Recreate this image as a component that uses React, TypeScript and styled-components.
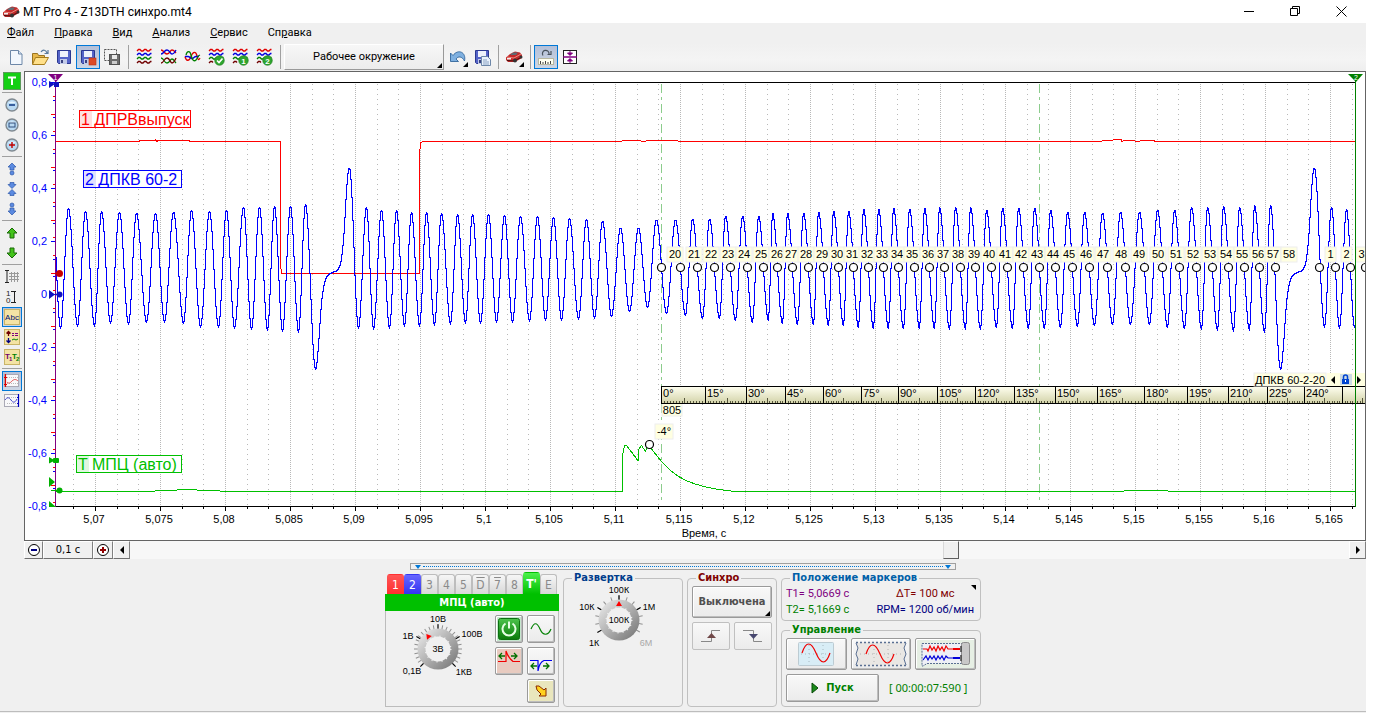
import React from "react";
import styled, { createGlobalStyle, css } from "styled-components";

const UI = `"DejaVu Sans Condensed", "DejaVu Sans", sans-serif`;
const ARIAL = `"Liberation Sans", Arial, sans-serif`;
const NARROW = `Roboto, "Noto Sans", sans-serif`;

const Global = createGlobalStyle`
  * { box-sizing: border-box; }
  body { margin: 0; background: #fff; }
  button { margin: 0; padding: 0; font: inherit; color: inherit; }
  svg { display: block; }
`;

const Window = styled.div`
  display: flex;
  flex-direction: column;
  min-height: 100vh;
  margin-right: 7px;
  background: #f0f0f0;
  color: #000;
  font: 11px/14px ${UI};
`;

/* ---------- title and menu ---------- */
const TitleBar = styled.header`
  display: flex;
  align-items: center;
  height: 23px;
  padding: 0 2px;
  gap: 3px;
  background: #fff;
`;
const Title = styled.h1`
  flex: 1;
  margin: 0;
  font: 12px/16px ${NARROW};
`;
const WindowControls = styled.div`
  display: flex;
`;
const ControlButton = styled.button`
  display: grid;
  place-items: center;
  width: 46px;
  height: 20px;
  border: 0;
  background: none;
`;
const MenuBar = styled.nav`
  display: flex;
  gap: 20px;
  height: 20px;
  padding: 0 7px;
  align-items: center;
`;
const MenuItem = styled.button`
  border: 0;
  background: none;
  line-height: 20px;
  font-family: ${NARROW};
`;

/* ---------- toolbar ---------- */
const Toolbar = styled.div`
  display: flex;
  align-items: center;
  height: 28px;
  padding-left: 4px;
  background: linear-gradient(#f0f0f0, #f4f4f4 60%, #eee);
`;
const activeTool = css`
  border: 1px solid #0078d7;
  background: linear-gradient(#b4c0d8, #cdd6e4);
`;
const ToolButton = styled.button<{ $active?: boolean }>`
  position: relative;
  display: grid;
  place-items: center;
  width: 24px;
  height: 24px;
  border: 1px solid transparent;
  background: none;
  ${(p) => p.$active && activeTool}
`;
const ToolSeparator = styled.span`
  width: 8px;
  height: 24px;
  display: flex;
  justify-content: center;
  &::before { content: ""; width: 1px; background: #a0a0a0; }
`;
const corner = css`
  &::after {
    content: "";
    position: absolute;
    right: 1px;
    bottom: 1px;
    border-style: solid;
    border-width: 0 0 5px 5px;
    border-color: transparent transparent #000;
  }
`;
const Workspace = styled.button`
  position: relative;
  width: 160px;
  height: 26px;
  margin-right: 2px;
  border: 1px solid;
  border-color: #fff #999 #999 #fff;
  background: linear-gradient(#f7f7f7, #ececec);
  font-family: ${NARROW};
  ${corner}
`;
const MenuTool = styled(ToolButton)`
  ${corner}
`;

/* ---------- work area ---------- */
const WorkArea = styled.main`
  display: flex;
`;
const SideBar = styled.aside`
  display: flex;
  flex-direction: column;
  flex: 0 0 24px;
  padding-left: 2px;
`;
const SideButton = styled(ToolButton)`
  width: 20px;
  height: 20px;
`;
const SideSeparator = styled.span`
  width: 20px;
  height: 4px;
  padding-top: 1px;
  &::before { content: ""; display: block; height: 1px; background: #a0a0a0; }
`;
const ChartColumn = styled.section`
  flex: 1;
  min-width: 0;
`;
const ChartFrame = styled.div`
  border: 1px solid #646464;
  background: #fff;
  svg { width: 100%; height: auto; }
`;
const ScrollRow = styled.div`
  display: flex;
  height: 18px;
`;
const ScrollButton = styled.button<{ $w: number }>`
  display: grid;
  place-items: center;
  flex: 0 0 ${(p) => p.$w}px;
  border: 1px solid;
  border-color: #fff #808080 #707070 #fff;
  background: #f0f0f0;
`;
const ScrollTrack = styled.input`
  appearance: none;
  flex: 1;
  min-width: 0;
  height: 18px;
  margin: 0;
  background: #f7f7f7;
  &::-webkit-slider-thumb {
    appearance: none;
    width: 16px;
    height: 18px;
    border: 1px solid;
    border-color: #fff #606060 #606060 #d8d8d8;
    background: #f0f0f0;
  }
`;

/* ---------- control panels ---------- */
const Splitter = styled.div`
  display: flex;
  align-items: center;
  align-self: center;
  justify-content: space-between;
  width: 546px;
  height: 7px;
  margin: 4px 0 1px;
  padding: 0 4px;
  border: 1px solid #a0a0a0;
  gap: 2px;
`;
const SplitDots = styled.span`
  flex: 1;
  border-top: 1px dotted #0078d7;
`;
const Panels = styled.div`
  display: flex;
  justify-content: center;
  gap: 4px;
  height: 136px;
`;
const Stack = styled.div`
  display: flex;
  flex-direction: column;
  width: 200px;
`;
const ChannelPanel = styled.section`
  display: flex;
  flex-direction: column;
  width: 174px;
  padding-top: 1px;
`;
const Tabs = styled.div`
  display: flex;
  align-items: flex-end;
  height: 22px;
  padding: 0 2px;
`;
const tabFill: Record<string, string> = {
  red: "linear-gradient(#ff5555, #ff2f2f)",
  blue: "linear-gradient(#6666ff, #3434f0)",
  green: "linear-gradient(#4cf04c, #00c000)",
  gray: "linear-gradient(#f6f6f6, #d8d8d8)",
};
const Tab = styled.button<{ $tone: string }>`
  flex: 1;
  height: ${(p) => (p.$tone === "green" ? 22 : 20)}px;
  border: 1px solid ${(p) => (p.$tone === "gray" ? "#bdbdbd" : "transparent")};
  border-bottom: 0;
  border-radius: 3px 3px 0 0;
  background: ${(p) => tabFill[p.$tone]};
  color: ${(p) => (p.$tone === "gray" ? "#8a8a8a" : "#fff")};
  font-size: 12px;
  font-weight: ${(p) => (p.$tone === "green" ? 700 : 400)};
`;
const Over = styled.span`
  text-decoration: overline;
`;
const ChannelTitle = styled.h2`
  margin: 0;
  background: #00c000;
  color: #fff;
  font: bold 11px/17px ${UI};
  text-align: center;
`;
const ChannelBody = styled.div`
  display: flex;
  justify-content: space-between;
  flex: 1;
  padding: 1px 3px 0 11px;
  border: 1px solid #bcbcbc;
  border-top: 0;
`;
const ChannelButtons = styled.div`
  display: grid;
  grid-template-columns: 28px 28px;
  grid-template-rows: 28px 28px 24px;
  gap: 4px;
  margin-top: 3px;
`;
const PushButton = styled.button<{ $bg?: string; $quiet?: boolean }>`
  position: relative;
  display: flex;
  align-items: center;
  justify-content: center;
  gap: 7px;
  border: 1px solid ${(p) => (p.$quiet ? "#c0c0c0" : "#9a9a9a")};
  border-radius: 2px;
  background: ${(p) => p.$bg ?? "linear-gradient(#f8f8f8, #ebebeb)"};
  ${(p) => !p.$quiet && "box-shadow: inset -1px -1px #bdbdbd, inset 1px 1px #fff;"}
`;
const PickButton = styled(PushButton)`
  grid-column: 2;
`;
const Group = styled.fieldset<{ $w: number }>`
  display: flex;
  flex-direction: column;
  width: ${(p) => p.$w}px;
  min-width: 0;
  margin: 0;
  padding: 0 4px;
  border: 1px solid #c0c0c0;
  border-radius: 4px;
`;
const Legend = styled.legend<{ $color: string }>`
  margin-left: 4px;
  padding: 0 2px;
  color: ${(p) => p.$color};
  font: bold 11px/14px ${UI};
`;
const MarkersGroup = styled(Group)`
  position: relative;
  height: 50px;
  margin-bottom: 2px;
`;
const ControlGroup = styled(Group)`
  flex: 1;
`;
const MarkerMenu = styled.button`
  position: absolute;
  right: 4px;
  top: 0;
  border: solid transparent;
  border-width: 5px 0 0 5px;
  border-top-color: #000;
  background: none;
`;
const MarkerValues = styled.dl`
  display: grid;
  grid-template-columns: auto auto;
  justify-content: space-between;
  margin: 0;
  padding: 1px 2px 0 0;
  line-height: 16px;
  font-family: ${NARROW};
`;
const MarkerValue = styled.div<{ $color: string }>`
  display: flex;
  gap: 3px;
  justify-content: center;
  color: ${(p) => p.$color};
  dt, dd { margin: 0; }
`;
const SyncButton = styled(PushButton)`
  height: 32px;
  margin-top: 1px;
  color: #505050;
  font-weight: 700;
  ${corner}
`;
const EdgeRow = styled.div`
  display: grid;
  grid-template-columns: 1fr 1fr;
  grid-auto-rows: 28px;
  gap: 4px;
  margin-top: 4px;
`;
const ModeRow = styled.div`
  display: grid;
  grid-template-columns: repeat(3, 1fr);
  grid-auto-rows: 32px;
  gap: 4px;
  margin-top: 1px;
`;
const RunRow = styled.div`
  display: flex;
  align-items: center;
  gap: 10px;
  margin-top: 4px;
`;
const StartButton = styled(PushButton)`
  width: 93px;
  height: 28px;
  color: #008000;
  font-weight: 700;
`;
const Timer = styled.output`
  color: #008000;
  white-space: nowrap;
  font-family: "Noto Sans", sans-serif;
`;
const KnobWrap = styled.div`
  display: flex;
  justify-content: center;
`;
const StatusBar = styled.footer`
  flex: 1;
  margin-top: 4px;
  border-top: 1px solid #bdbdbd;
`;

/* ---------- icons ---------- */
const S = ({ w = 18, h = w, children }: { w?: number; h?: number; children: React.ReactNode }) => (
  <svg width={w} height={h} viewBox={`0 0 ${w} ${h}`} fill="none" aria-hidden="true">{children}</svg>
);
const Car = () => (
  <S>
    <path d="M1 9.500L5 6l5-2.500 5 1 2 2.500v3l-7 4H3l-2-2z" fill="#c22a2a" />
    <path d="M5 7l3-2.500h5L11 7z" fill="#5f6c74" />
    <path d="M2 9l7 1 7-4" stroke="#ef8a80" />
    <path d="M2 12.500l7 .5 7-3.500" stroke="#4a0c0c" />
    <circle cx="10" cy="12.500" r="2" fill="#333" /><circle cx="16" cy="9" r="1.500" fill="#333" />
    <rect x="2" y="10" width="4" height="1.500" fill="#eee" />
  </S>
);
const NewFile = () => (
  <S><path d="M3.500 2.500h8l3.500 3.500v10.500H3.500z" fill="#f2f7fd" stroke="#6d87a8" /><path d="M11.500 2.500V6H15" fill="#d5e3f3" stroke="#6d87a8" /></S>
);
const OpenFile = () => (
  <S>
    <path d="M1.500 16V5.500h5l1 2h6v3" fill="#e8b84a" stroke="#9a7420" />
    <path d="M1.500 16.500l3-7h13l-4 7z" fill="#ffe08a" stroke="#a67c1c" />
    <path d="M10 4c2-3 5-2 6 1m1-3v3.500h-3.500" stroke="#5a7a9c" strokeWidth="1.200" />
  </S>
);
const Floppy = ({ extra, gray }: { extra?: React.ReactNode; gray?: boolean }) => (
  <S>
    <path d="M2.500 2.500h13v13h-12l-1-1z" fill={gray ? "#777" : "#5564c8"} stroke={gray ? "#555" : "#2b3890"} />
    <rect x="5" y="3" width="8" height="6" fill="#eef2fb" />
    <rect x="5" y="11" width="7" height="5" fill={gray ? "#ccc" : "#c3cbe8"} /><rect x="6" y="12" width="2" height="3" fill="#39427e" />
    {extra}
  </S>
);
const SaveStop = () => <Floppy extra={<rect x="10" y="10" width="7" height="7" fill="#dc4a26" stroke="#b83413" strokeWidth=".6" />} />;
const SavePage = () => (
  <Floppy extra={<g><path d="M8.500 8.500h6l3 3v6h-9z" fill="#eaf2fc" stroke="#6d87a8" /><path d="M10 12h4m-4 2h6m-6 2h6" stroke="#8aa2c2" /></g>} />
);
const SaveSelection = () => (
  <S>
    <path d="M1.500 1.500h12v11h-12z" stroke="#555" strokeDasharray="2 1" />
    <rect x="6.500" y="6.500" width="10" height="10" fill="#6c6c6c" stroke="#505050" />
    <rect x="9" y="7" width="5" height="4" fill="#e8e8e8" /><rect x="9" y="13" width="5" height="3" fill="#ccc" />
  </S>
);
const wavy = (y: number) => `M2 ${y + 1}l1.500-1.500h1.500l1.500 1.500h1.500l1.500-1.500h1.500l1.500 1.500h1.500l1.500-1.500h1`;
const Waves = ({ badge }: { badge?: string }) => (
  <S>
    <path d={wavy(2)} stroke="#e00000" strokeWidth="1.300" /><path d={wavy(6)} stroke="#0000e0" strokeWidth="1.300" />
    <path d={wavy(10)} stroke="#008000" strokeWidth="1.300" />
    <path d={badge ? "M2 15l1.500-1.500h1.500l1 1" : wavy(14)} stroke="#700000" strokeWidth="1.300" />
    {badge && <g>
      <circle cx="12.500" cy="12.500" r="4.800" fill="#2ea52e" stroke="#1c7a1c" strokeWidth=".6" />
      {badge === "ok" ? <path d="M10 12.500l2 2 3.500-4" stroke="#fff" strokeWidth="1.700" />
        : <text x="12.500" y="15.500" fill="#fff" fontFamily="Liberation Sans" fontWeight="700" fontSize="8" textAnchor="middle">{badge}</text>}
    </g>}
  </S>
);
const CrossWaves = () => (
  <S>
    <path d="M2 2c3 0 3 4 6 4s3-4 5-4 2 1 4 3" stroke="#e00000" strokeWidth="1.300" /><path d="M2 6c3 0 3-4 6-4s3 4 5 4 3-2 4-4" stroke="#0000e0" strokeWidth="1.300" />
    <path d="M2 10c3 0 3 5 6 5s3-4 5-4 2 2 4 4" stroke="#008000" strokeWidth="1.300" /><path d="M2 15c3 0 3-5 6-5s3 5 5 5 3-3 4-5" stroke="#700000" strokeWidth="1.300" />
  </S>
);
const TriWaves = () => (
  <S>
    <path d="M2 8.500C3 13 6 14 8 8.500S13 3 14 8s2 4 3 2" stroke="#e00000" strokeWidth="1.300" /><path d="M2 8.500h3c2 0 2 2 4 2s2-2 4-2h3" stroke="#0000e0" strokeWidth="1.300" />
    <path d="M3 7c1-4 4-5 5 0s3 7 5 5 1-4 4-5" stroke="#008000" strokeWidth="1.300" />
  </S>
);
const Undo = () => (
  <S><path d="M1.500 5v8.500h8L7 11c2-3 6-3 8.500 2C17.500 4 9 .5 4 7.500z" fill="#7fb0e0" stroke="#33679c" strokeWidth=".9" /></S>
);
const RulerTool = () => (
  <S>
    <path d="M6 7.500a3.300 3.300 0 1 1 6-1.500M14 3v3.500h-3.500" stroke="#48525c" strokeWidth="1.200" />
    <rect x="1.500" y="10.500" width="15" height="6" fill="#fffff0" stroke="#b8b8a0" />
    <path d="M3.500 13v3m2.500-2v2m2.500-3v3m2.500-2v2m2.500-3v3" stroke="#444" />
  </S>
);
const FitTool = () => (
  <S w={14} h={14}>
    <rect x=".5" y=".5" width="13" height="13" fill="#fff" stroke="#222" />
    <path d="M7 1v4M4.500 3h5L7 5.500zM7 13V9M4.500 11h5L7 8.500z" stroke="#800080" fill="#800080" />
    <path d="M0 7h14" stroke="#800080" strokeWidth="1.500" />
  </S>
);
const Lens = ({ kind }: { kind: string }) => (
  <S w={14}>
    <circle cx="7" cy="7" r="6" fill="#b9d9f2" stroke="#7f8990" strokeWidth="1.400" /><path d="M3 5a5 4 0 0 1 8 0" fill="#e8f5ff" />
    {kind === "box" ? <rect x="4" y="5" width="6" height="4" stroke="#2f4e7c" />
      : <path d={kind === "plus" ? "M4 7h6M7 4v6" : "M4 7h6"} stroke={kind === "plus" ? "#c00000" : "#002a7a"} strokeWidth="1.400" />}
  </S>
);
const Mover = ({ kind }: { kind: string }) => (
  <S w={14}>
    <g fill="#5b8ae0" stroke="#2d57aa" strokeWidth=".7">
      {kind === "up" && <g><path d="M7 1l4 4H9v3H5V5H3z" /><circle cx="7" cy="11" r="2" /></g>}
      {kind === "down" && <g><path d="M7 13l4-4H9V6H5v3H3z" /><circle cx="7" cy="3" r="2" /></g>}
      {kind === "both" && <g><path d="M7 6.500l4-4H9V.5H5v2H3zM7 7.500l4 4H9v2H5v-2H3z" /></g>}
    </g>
  </S>
);
const GreenArrow = ({ down }: { down?: boolean }) => (
  <S w={14}><path d={down ? "M7 12l5-5H9V2H5v5H2z" : "M7 2l5 5H9v5H5V7H2z"} fill="#42c21a" stroke="#1a6a08" /></S>
);
const GridIcon = () => (
  <S w={16}><path d="M1 1.500h4M1 13.500h4M3 2v11" stroke="#222" /><path d="M5 4.500h10M5 7.500h10M5 10.500h10M7.500 3v10M10.500 3v10M13.500 3v10" stroke="#999" /></S>
);
const LevelIcon = () => (
  <S w={14} h={16}>
    <g fill="#222" fontSize="8" fontFamily="Liberation Sans"><text x="1" y="7">1</text><text x="1" y="14">0</text></g>
    <path d="M6 2.500h5M6 13.500h5M9.500 3v10" stroke="#222" />
  </S>
);
const YellowIcon = ({ kind }: { kind: string }) => (
  <S w={16}>
    <rect x=".5" y=".5" width="15" height="15" fill="#f4e3a5" stroke="#c9b468" />
    {kind === "abc" && <text x="8" y="11" fontSize="8" fontFamily="Liberation Sans" fill="#001070" textAnchor="middle">Abc</text>}
    {kind === "arrows" && <g><path d="M4.500 2v5M2.500 4.500l2-2 2 2" stroke="#700000" strokeWidth="1.300" /><path d="M4.500 9v5M2.500 11.500l2 2 2-2" stroke="#000080" strokeWidth="1.300" /><path d="M8 4.500h2m1 0h3M8 6.500h2m1 0h3" stroke="#800080" /><path d="M8 11l2-1 2 1 2-1" stroke="#008000" /></g>}
    {kind === "tt" && <g fontFamily="Liberation Sans" fontWeight="700" fontSize="8"><text x="1" y="10" fill="#700070">T</text><text x="5" y="12" fontSize="6" fill="#700070">1</text><text x="8" y="10" fill="#008000">T</text><text x="12" y="12" fontSize="6" fill="#008000">2</text></g>}
  </S>
);
const GraphIcon = ({ blue }: { blue?: boolean }) => (
  <S w={16}>
    <rect x=".5" y="1.500" width="14" height="12" fill="#f8f8fa" stroke="#a9a9b5" /><path d="M3 4.500h11M3 10.500h11" stroke="#bbb" strokeDasharray="1 1" />
    {blue ? <g><path d="M1 7c2-3 4-3 6 0s4 3 6-1" stroke="#4444c8" /><path d="M14.500 1v13M13 4.500h2M13 10.500h2" stroke="#0000c0" strokeWidth="1.200" /></g>
      : <g><path d="M3 9c2 2 3 1 5-1s4-2 6 0" stroke="#e05050" /><path d="M1.500 1v13M0 4.500h3M0 11.500h3" stroke="#e00000" strokeWidth="1.200" /></g>}
  </S>
);
const Round = ({ plus }: { plus?: boolean }) => (
  <S w={14}>
    <circle cx="7" cy="7" r="5.500" fill="#fff" stroke="#000" />
    <path d={plus ? "M4 7h6M7 4v6" : "M4 7h6"} stroke={plus ? "#900000" : "#000080"} strokeWidth="2" />
  </S>
);
const Arrow = ({ right }: { right?: boolean }) => (
  <S w={6} h={8}><path d={right ? "M1 0l4 4-4 4z" : "M5 0L1 4l4 4z"} fill="#000" /></S>
);
const Drop = () => <S w={6} h={4}><path d="M0 0h6L3 4z" fill="#0078d7" /></S>;

/* ---------- chart ---------- */
const yTicks = ["0,8", "0,6", "0,4", "0,2", "0", "-0,2", "-0,4", "-0,6", "-0,8"];
const xTicks = ["5,07", "5,075", "5,08", "5,085", "5,09", "5,095", "5,1", "5,105", "5,11", "5,115", "5,12", "5,125", "5,13", "5,135", "5,14", "5,145", "5,15", "5,155", "5,16", "5,165"];

/* Turning points of the crankshaft signal, crest and trough in turn. */
const teethA = [
  [52, 209], [60, 328], [68, 207], [77, 326], [85, 210], [94, 326], [101, 210], [110, 323], [119, 211], [128, 324], [136, 212], [146, 322], [155, 212], [164, 322], [173, 211], [183, 323], [191, 209], [200, 327], [209, 210], [218, 327],
  [226, 209], [234, 328], [243, 206], [251, 329], [259, 206], [267, 330], [274, 205], [282, 331], [290, 205], [298, 332], [305, 203], [315, 369],
];
const teethB = [
  [349, 167], [358, 328], [366, 206], [373, 329], [381, 209], [389, 328], [396, 209], [404, 326], [411, 211], [419, 326], [426, 211], [434, 325], [441, 212], [450, 324], [457, 213], [465, 323],
  [472, 213], [480, 323], [488, 213], [496, 322], [504, 214], [512, 322], [520, 215], [529, 321], [537, 215], [545, 320], [553, 216], [561, 320], [569, 217], [578, 319], [586, 218], [594, 318], [602, 220], [611, 316], [620, 227], [629, 311], [638, 227], [647, 307],
];
const toothX = [661, 680, 697, 714, 730, 747, 763, 777, 792, 808, 823, 838, 853, 868, 883, 898, 914, 929, 944, 960, 975, 991, 1007, 1023, 1039, 1055, 1072, 1089, 1107, 1125, 1144, 1162, 1179, 1196, 1212, 1228, 1244, 1259, 1275];
const crestY = [219, 219, 218, 218, 215, 215, 215, 212, 212, 212, 211, 210, 210, 208, 208, 207, 208, 207, 206, 206, 206, 209, 207, 207, 207, 209, 211, 211, 212, 211, 211, 209, 209, 206, 206, 205, 206, 204, 204];
const troughY = [313, 315, 318, 318, 320, 322, 320, 323, 324, 324, 325, 325, 327, 328, 328, 328, 328, 328, 329, 329, 329, 327, 328, 328, 328, 327, 326, 325, 324, 324, 324, 327, 328, 329, 330, 331, 330, 332, 370];
const teethC = toothX.flatMap((x, i) => [[x - 5, crestY[i]], [x + 5, troughY[i]]]);
const teethD = [[1314, 167], [1324, 327], [1331, 206], [1339, 328], [1346, 208], [1354, 327], [1362, 208]];

/* Signal level for every pixel column: cosine swings between turning points. */
const swing = (points: number[][]) =>
  points.slice(1).flatMap(([x, y], i) => {
    const [px, py] = points[i];
    return Array.from({ length: x - px }, (_, k) => [px + k, py + ((y - py) * (1 - Math.cos((Math.PI * k) / (x - px)))) / 2]);
  });
/* The two missing teeth, one level per column after the deep trough. */
const gapY = [369, 366, 357, 345, 330, 315, 302, 294, 287, 282, 279, 277, 275, 274, 273, 273, 272, 272, 271, 271, 271, 270, 269, 268, 266, 263, 258, 250, 240, 226, 208, 190, 177, 169];
const gap = (x: number) => gapY.map((y, i) => [x + i, y]);
const crankLevels = [...swing(teethA), ...gap(315), ...swing([...teethB, ...teethC]), ...gap(1280), ...swing(teethD)];
const crank = "M" + crankLevels.map(([x, y], i) => {
  const next = crankLevels[i + 1] ?? [x, y];
  const middle = Math.round((y + next[1]) / 2) + 0.5;
  return `${i ? "H" : ""}${x + 0.5}${i ? "" : ` ${Math.round(y) + 0.5}`}V${Math.round(y) + 0.5}V${middle}`;
}).join("");

const divisions = [661, 705, 746, 785, 823, 861, 898, 937, 975, 1014, 1055, 1097, 1144, 1187, 1228, 1267, 1304, 1342, 1380];
const tags = [...toothX.map((x, i) => [x, i + 20]), [1319, 1], [1335, 2], [1350, 3]];

const Note = ({ x, y, w, h = 15, tx, children }: { x: number; y: number; w: number; h?: number; tx?: number; children: React.ReactNode }) => (
  <g>
    <rect x={x} y={y} width={w} height={h} fill="#ffffe1" stroke="#eee" />
    <text x={tx ?? x + w / 2} y={y + 11} textAnchor={tx ? "start" : "middle"}>{children}</text>
  </g>
);
const SignalName = ({ x, y, w, color, mark, children }: { x: number; y: number; w: number; color: string; mark: string; children: string }) => (
  <g fontSize="16" fill={color}>
    <rect x={x + 0.5} y={y + 0.5} width={w} height="17" fill="#fff" stroke={color} />
    <rect x={x + 1} y={y + 1} width="12" height="16" opacity=".12" />
    <text x={x + 2} y={y + 15}>{mark} {children}</text>
  </g>
);
const crispLine = { shapeRendering: "crispEdges" as const };

const Chart = () => (
  <svg viewBox="25 72 1340 468" fontFamily={ARIAL} fontSize="11" role="img" aria-label="Осциллограмма">
    <defs>
      <clipPath id="plot"><rect x="55" y="82" width="1300" height="425" /></clipPath>
      <linearGradient id="scale" x1="0" y1="0" x2="0" y2="1"><stop offset="0" stopColor="#fffff0" /><stop offset="1" stopColor="#d2d2a8" /></linearGradient>
    </defs>
    <g stroke="#b8b8b8" {...crispLine}>
      {[30, ...xTicks.map((_, i) => 95 + 65 * i)].map((x) => (
        <g key={x}>
          {x > 55 && <path d={`M${x + 0.5} 84V506`} strokeDasharray="1 1" />}
          {x > 55 && x < 1330 && <path d={`M${x + 22.5} 84V506`} strokeDasharray="1 4" />}
          <path d={x < 1330 ? `M${x + 43.5} 84V506` : "M1352.5 84V506"} strokeDasharray="1 4" />
        </g>
      ))}
    </g>
    <g stroke="#000" {...crispLine}>
      <path d="M55 82.500H1355M55 506.500H1356" />
      {xTicks.map((t, i) => <path key={t} d={`M${95.5 + 65 * i} 507v4m22-4v${i < 20 ? 2 : 0}m-44-2v2`} />)}
    </g>
    <g textAnchor="middle">
      {xTicks.map((t, i) => <text key={t} x={94 + 65 * i} y="523">{t}</text>)}
      <text x="704" y="537">Время, с</text>
    </g>
    <g fill="#0000ff" textAnchor="end">
      {yTicks.map((t, i) => <text key={t} x="47" y={86 + 53 * i}>{t}</text>)}
    </g>
    <g {...crispLine}>
      {Array.from({ length: 25 }, (_, i) => {
        const y = Math.round(82 + i * 17.667) + 0.5;
        return <path key={i} d={`M${i % 3 ? 53 : 51} ${y}H55`} stroke="#0000ff" />;
      })}
      {Array.from({ length: 24 }, (_, i) => {
        const y = Math.round(96 + i * 17.667) + 0.5;
        return <path key={i} d={`M${i % 3 === 1 ? 51 : 53} ${y}H55`} stroke="#ff0000" />;
      })}
    </g>
    <g stroke="#8ccc8c" strokeDasharray="9 4 3 4" {...crispLine}>
      <path d="M661.500 84V502" /><path d="M1039.500 84V502" />
    </g>
    <g clipPath="url(#plot)" fill="none" {...crispLine}>
      <path d="M55 491.500H150L160 490.500H172L182 489.500H190L204 490.500H215L225 491.500H622.500V455L624.500 446 626.500 445.500 630 450 637.500 460H638.500L639 449 641.500 445.500 645.500 451.500 647 447 649 446 653.500 451.500 661.500 461.500C675 477 690 487 735 491.500L800 491.500H1118L1130 490.500H1142L1160 490.500 1175 491.500H1355" stroke="#00c000" />
      <path d="M55 141.500H139V140.500H155V139.500L157 141.500 158 140.500H189V141.500H280.500V264L281.500 273.500H419.500V155L420.500 143 422.500 141.500H620L624 140.500H640L642 141.500 650 140.500H676L680 141.500H1098L1106 140.500 1121 139.500 1122 141.500 1124 140.500H1132L1138 141.500 1142 140.500H1154V141.500H1355" stroke="#ff0000" />
      <path d={crank} stroke="#0000ff" />
    </g>

    <SignalName x={79} y={110} w={111} color="#ff0000" mark="1">ДПРВвыпуск</SignalName>
    <SignalName x={83} y={170} w={98} color="#0000ff" mark="2">ДПКВ 60-2</SignalName>
    <SignalName x={76} y={455} w={105} color="#00c000" mark="T">МПЦ (авто)</SignalName>

    {tags.map(([x, n]) => n < 10
      ? <Note key={n} x={x + 6} y={247} w={11}>{n}</Note>
      : <Note key={n} x={x + 6} y={247} w={16}>{n}</Note>)}
    <g fill="#fff" stroke="#000">
      {[...tags.map(([x]) => x), 1365, 649].map((x) => <circle key={x} cx={x + 0.5} cy={x === 649 ? 444.5 : 267.5} r="4" strokeWidth="1.200" />)}
    </g>
    <Note x={655} y={424} w={18}>-4°</Note>
    <Note x={662} y={403} w={20} h={13}>805</Note>

    <rect x="661.500" y="386.500" width="710" height="17" fill="url(#scale)" stroke="#000" {...crispLine} />
    {divisions.slice(0, -1).map((x, i) => {
      const step = (divisions[i + 1] - x) / 15;
      return (
        <g key={x} {...crispLine}>
          <path d={`M${x + 0.5} 387V403`} stroke="#000" />
          {Array.from({ length: 14 }, (_, k) => (
            <path key={k} d={`M${Math.round(x + step * (k + 1)) + 0.5} 403v${k === 7 ? -5 : -2}`} stroke="#55553c" />
          ))}
          {i < 17 && <text x={x + 2} y="397">{i * 15}°</text>}
        </g>
      );
    })}
    <Note x={1254} y={373} w={72} h={13} tx={1255}>ДПКВ 60-2-20</Note>
    <rect x="1327" y="373" width="40" height="13" fill="#ffffe1" />
    <rect x="1340" y="374" width="12" height="11" fill="#cddbe4" />
    <path d="M1335 376v8l-4-4zM1357 376v8l4-4z" fill="#000" />
    <rect x="1342" y="379" width="7" height="5" fill="#0044d0" /><path d="M1343.500 379v-2a2 2 0 0 1 4 0v2" fill="none" stroke="#0044d0" strokeWidth="1.500" />
    <path d="M1345.500 380v2" stroke="#fff" />

    <path d="M55.500 80V507" stroke="#800080" {...crispLine} />
    <path d="M1355.500 80V507" stroke="#008000" {...crispLine} />
    <path d="M48 74h15l-7 8z" fill="#800080" /><path d="M1348 74h15l-7 8z" fill="#008000" />
    <g fill="#fff" fontSize="7" textAnchor="middle"><text x="55.500" y="80">1</text><text x="1356" y="80">2</text></g>
    <g fill="#1010c0">
      <path d="M49 81l6 3-6 4z" /><rect x="54" y="82" width="5" height="5" />
      <path d="M49 290l6 4.500-6 4.500zM55 294h5v1h-5z" /><circle cx="59.500" cy="294.500" r="3" />
    </g>
    <g fill="#00b000">
      <path d="M49 457l6 3.500-6 3z" /><rect x="53" y="458" width="6" height="5" rx="1" />
      <path d="M49 477l6 5-6 5zM49 501l7 6h-7zM51 490h8v1h-8z" /><circle cx="59.500" cy="490.500" r="3" />
    </g>
    <g fill="#c80000"><circle cx="59.500" cy="273.500" r="3.500" /><path d="M55 273h4v1h-4z" /></g>
  </svg>
);

/* ---------- knobs ---------- */
type KnobText = [number, number, string, string?];
const Knob = ({ w, h, cx, cy, pointer, major, minor, value, labels, title }: {
  w: number; h: number; cx: number; cy: number; pointer: number; major: number[]; minor: number[]; value: string; labels: KnobText[]; title: string;
}) => (
  <svg width={w} height={h} viewBox={`0 0 ${w} ${h}`} fontFamily={ARIAL} fontSize="9" textAnchor="middle" role="img" aria-label={title}>
    <defs><linearGradient id="metal" x1="0" y1="0" x2="1" y2="1"><stop offset=".1" stopColor="#e4e4e4" /><stop offset=".9" stopColor="#7c7c7c" /></linearGradient></defs>
    {minor.map((a) => <path key={a} d="M0 -19V-24" stroke="#909090" transform={`translate(${cx} ${cy}) rotate(${a})`} />)}
    {major.map((a) => <path key={a} d="M0 -19V-25" stroke="#000" transform={`translate(${cx} ${cy}) rotate(${a})`} />)}
    <circle cx={cx} cy={cy} r="20.500" fill="url(#metal)" />
    <circle cx={cx} cy={cy} r="12.500" fill="#f0f0f0" />
    <circle cx={cx} cy={cy} r="12.500" fill="none" stroke="#f0f0f0" strokeWidth="2" strokeDasharray="1 4" />
    <path d="M0 -19l-3 5h6z" fill="#ff0000" transform={`translate(${cx} ${cy}) rotate(${pointer})`} />
    <text x={cx} y={cy + 3}>{value}</text>
    {labels.map(([x, y, t, c]) => <text key={t} x={x} y={y} fill={c ?? "#000"}>{t}</text>)}
  </svg>
);

/* ---------- mode icons ---------- */
const Power = () => (
  <S w={24}>
    <defs><linearGradient id="pw" x1="0" y1="0" x2="0" y2="1"><stop stopColor="#4cc44c" /><stop offset="1" stopColor="#0a7a0a" /></linearGradient></defs>
    <rect x="1.500" y="1.500" width="21" height="21" rx="2" fill="url(#pw)" stroke="#0c7010" /><path d="M8.500 6.500a6.500 6.500 0 1 0 7 0M12 4.500v7" stroke="#e4ffe4" strokeWidth="2" />
  </S>
);
const SineGreen = () => <S w={22} h={14}><path d="M1 7C4 0 7 0 10 7s8 7 11 0" stroke="#008000" strokeWidth="1.200" /></S>;
const Sides = ({ x, y }: { x: number; y: number }) => (
  <path transform={`translate(${x} ${y})`} d="M0 0h6M3 -3l-3 3 3 3M12 0h6M15 -3l3 3-3 3" stroke="#007000" strokeWidth="1.300" />
);
const SparkUp = () => <S w={24}><path d="M1 12.500h8V2c2 6 5 9 7 10.500h7" stroke="#f00000" strokeWidth="1.200" /><Sides x={2} y={7} /></S>;
const SparkDown = () => <S w={24}><path d="M1 11.500h8V22c1-6 3-9.500 6-10.500h8" stroke="#0000f0" strokeWidth="1.200" /><Sides x={2} y={17} /></S>;
const Pick = () => <S w={14}><path d="M2 2l3 0 5 4 2-2v8H5l2-2-4-4z" fill="#ffd21e" stroke="#8a2a00" /></S>;
const RiseEdge = () => <S w={22} h={14}><path d="M1 12.500h10.500v-11H20" stroke="#888" /><path d="M7 9l4.500-5L16 9z" fill="#704848" /></S>;
const FallEdge = () => <S w={22} h={14}><path d="M1 1.500h10.500v11H20" stroke="#888" /><path d="M7 5l4.500 5L16 5z" fill="#484870" /></S>;
const sine = "M4 12C8 0 13 0 18 12s10 12 14 0";
const Screen = () => (
  <S w={36} h={26}>
    <rect x=".5" y="1.500" width="35" height="23" rx="1" fill="#d8edf6" stroke="#bccbd2" /><path d="M3 13h30M11 4v18M25 4v18" stroke="#a8b8c0" strokeDasharray="1 3" /><path d={sine} stroke="#f00000" strokeWidth="1.200" />
  </S>
);
const Tape = () => (
  <S w={54} h={26}>
    <path d="M2 1.500h50l-2 6 2 6-2 5 2 6H2l2-6-2-6 2-5z" fill="#e9e7e4" /><path d="M2 1.500h50M2 24.500h50" stroke="#5a6f92" strokeWidth="1.500" strokeDasharray="2 2" />
    <path d="M2 2l2 5-2 6 2 5-2 6M52 2l-2 5 2 6-2 5 2 6" stroke="#5a6f92" /><path d="M6 13h42M20 4v18M34 4v18" stroke="#b4b4b4" strokeDasharray="1 3" />
    <g transform="translate(8 1)"><path d={sine} stroke="#f00000" strokeWidth="1.200" /></g>
  </S>
);
const Scroll = () => (
  <S w={54} h={26}>
    <path d="M3 2.500h40v20H8l-4 2.500H3z" fill="#eef0f6" stroke="#5a6f92" strokeDasharray="2 1" />
    <rect x="42.500" y="1.500" width="8" height="22" rx="2" fill="#c8c8c8" stroke="#8c8c8c" />
    <path d="M4 8h4l1 2 2-5 2 4 2-3 2 4 2-5 2 4 2-3 2 4 2-5 2 3h6" stroke="#f00000" strokeWidth="1.200" />
    <path d="M4 19l3-4 2 4 2-4 2 3 2-3 2 4 2-4 2 3 2-3 2 4 2-4 2 2h6" stroke="#0000d8" strokeWidth="1.200" />
    <path d="M34 8h7" stroke="#f00000" strokeWidth="2" /><path d="M34 17h7" stroke="#0000d8" strokeWidth="2" /><path d="M42 5v6M42 14v6" stroke="#444" strokeWidth="1.500" />
  </S>
);

const channels: [React.ReactNode, string][] = [["1", "red"], ["2", "blue"], ["3", "gray"], ["4", "gray"], ["5", "gray"], [<Over key="d">D</Over>, "gray"], [<Over key="s">7</Over>, "gray"], ["8", "gray"], ["T'", "green"], ["E", "gray"]];
const range = (from: number, to: number, n: number) => Array.from({ length: n }, (_, i) => from + ((to - from) * i) / (n - 1));

export default function App() {
  return (
    <Window>
      <Global />
      <TitleBar>
        <Car />
        <Title>MT Pro 4 - Z13DTH синхро.mt4</Title>
        <WindowControls>
          <ControlButton aria-label="Свернуть"><S w={11}><path d="M0 5.500h10" stroke="#000" /></S></ControlButton>
          <ControlButton aria-label="Восстановить"><S w={11}><path d="M.5 2.500h7v7h-7zM2.500 2.500v-2h7v7h-2" stroke="#000" /></S></ControlButton>
          <ControlButton aria-label="Закрыть"><S w={11}><path d="M.5.5l10 10M10.500.5l-10 10" stroke="#000" /></S></ControlButton>
        </WindowControls>
      </TitleBar>
      <MenuBar>
        <MenuItem><u>Ф</u>айл</MenuItem>
        <MenuItem><u>П</u>равка</MenuItem>
        <MenuItem><u>В</u>ид</MenuItem>
        <MenuItem><u>А</u>нализ</MenuItem>
        <MenuItem><u>С</u>ервис</MenuItem>
        <MenuItem>Сп<u>р</u>авка</MenuItem>
      </MenuBar>
      <Toolbar>
        <ToolButton aria-label="Новый"><NewFile /></ToolButton>
        <ToolButton aria-label="Открыть"><OpenFile /></ToolButton>
        <ToolButton aria-label="Сохранить"><Floppy /></ToolButton>
        <ToolButton aria-label="Сохранять запись" $active><SaveStop /></ToolButton>
        <ToolButton aria-label="Сохранить фрагмент"><SaveSelection /></ToolButton>
        <ToolSeparator />
        <ToolButton aria-label="Все каналы"><Waves /></ToolButton>
        <ToolButton aria-label="Пары каналов"><CrossWaves /></ToolButton>
        <ToolButton aria-label="Наложение"><TriWaves /></ToolButton>
        <ToolButton aria-label="Выбранные каналы"><Waves badge="ok" /></ToolButton>
        <ToolButton aria-label="Набор 1"><Waves badge="1" /></ToolButton>
        <ToolButton aria-label="Набор 2"><Waves badge="2" /></ToolButton>
        <ToolSeparator />
        <Workspace>Рабочее окружение</Workspace>
        <MenuTool aria-label="Отменить"><Undo /></MenuTool>
        <ToolButton aria-label="Сохранить окружение"><SavePage /></ToolButton>
        <ToolSeparator />
        <MenuTool aria-label="Автомобиль"><Car /></MenuTool>
        <ToolSeparator />
        <ToolButton aria-label="Линейка" $active><RulerTool /></ToolButton>
        <ToolButton aria-label="Вписать"><FitTool /></ToolButton>
      </Toolbar>

      <WorkArea>
        <SideBar>
          <SideButton aria-label="Синхронизация">
            <S><rect x=".5" y=".5" width="17" height="17" fill="#14cf14" stroke="#5a9a5a" /><path d="M5 5.500h8M9 5v8" stroke="#fff" strokeWidth="2" /></S>
          </SideButton>
          <SideSeparator />
          <SideButton aria-label="Уменьшить"><Lens kind="minus" /></SideButton>
          <SideButton aria-label="Весь сигнал"><Lens kind="box" /></SideButton>
          <SideButton aria-label="Увеличить"><Lens kind="plus" /></SideButton>
          <SideSeparator />
          <SideButton aria-label="Сдвиг вверх"><Mover kind="up" /></SideButton>
          <SideButton aria-label="К центру"><Mover kind="both" /></SideButton>
          <SideButton aria-label="Сдвиг вниз"><Mover kind="down" /></SideButton>
          <SideSeparator />
          <SideButton aria-label="Вверх"><GreenArrow /></SideButton>
          <SideButton aria-label="Вниз"><GreenArrow down /></SideButton>
          <SideSeparator />
          <SideButton aria-label="Сетка"><GridIcon /></SideButton>
          <SideButton aria-label="Уровни"><LevelIcon /></SideButton>
          <SideButton aria-label="Подписи" $active><YellowIcon kind="abc" /></SideButton>
          <SideButton aria-label="Измерения"><YellowIcon kind="arrows" /></SideButton>
          <SideButton aria-label="Маркеры времени"><YellowIcon kind="tt" /></SideButton>
          <SideSeparator />
          <SideButton aria-label="Шкала слева" $active><GraphIcon /></SideButton>
          <SideButton aria-label="Шкала справа"><GraphIcon blue /></SideButton>
        </SideBar>
        <ChartColumn>
          <ChartFrame><Chart /></ChartFrame>
          <ScrollRow>
            <ScrollButton $w={19} aria-label="Сжать"><Round /></ScrollButton>
            <ScrollButton $w={50}>0,1 с</ScrollButton>
            <ScrollButton $w={20} aria-label="Растянуть"><Round plus /></ScrollButton>
            <ScrollButton $w={17} aria-label="Назад"><Arrow /></ScrollButton>
            <ScrollTrack type="range" min={0} max={1000} defaultValue={676} aria-label="Прокрутка" />
            <ScrollButton $w={17} aria-label="Вперёд"><Arrow right /></ScrollButton>
          </ScrollRow>
        </ChartColumn>
      </WorkArea>

      <Splitter><Drop /><SplitDots /><Drop /></Splitter>

      <Panels>
        <ChannelPanel>
          <Tabs>{channels.map(([c, tone], i) => <Tab key={i} $tone={tone}>{c}</Tab>)}</Tabs>
          <ChannelTitle>МПЦ (авто)</ChannelTitle>
          <ChannelBody>
            <Knob title="Предел измерения" w={92} h={80} cx={41} cy={37} pointer={-38} value="3В"
              major={[-135, -60, 0, 60, 135]} minor={range(-135, 135, 25)}
              labels={[[41, 10, "10В"], [11, 27, "1В"], [75, 25, "100В"], [67, 63, "1КВ"], [15, 62, "0,1В"]]} />
            <ChannelButtons>
              <PushButton $bg="#c5e6cd" aria-label="Включить"><Power /></PushButton>
              <PushButton aria-label="Фильтр"><SineGreen /></PushButton>
              <PushButton $bg="#e8cbc0" aria-label="Положительные пики"><SparkUp /></PushButton>
              <PushButton aria-label="Отрицательные пики"><SparkDown /></PushButton>
              <PickButton $bg="#e9e6bd" aria-label="Выбор"><Pick /></PickButton>
            </ChannelButtons>
          </ChannelBody>
        </ChannelPanel>

        <Group $w={120}>
          <Legend $color="#003c8c">Развертка</Legend>
          <KnobWrap>
            <Knob title="Развертка" w={110} h={70} cx={51} cy={35} pointer={0} value="100К"
              major={[-120, -60, 0, 60]} minor={[...range(-60, 0, 4), ...range(0, 60, 4), -80, -100, 80, 100, 120]}
              labels={[[51, 8, "100К"], [19, 25, "10К"], [81, 25, "1М"], [26, 61, "1К"], [78, 61, "6М", "#a8a8a8"]]} />
          </KnobWrap>
        </Group>

        <Group $w={90}>
          <Legend $color="#800000">Синхро</Legend>
          <SyncButton>Выключена</SyncButton>
          <EdgeRow>
            <PushButton $quiet aria-label="По фронту"><RiseEdge /></PushButton>
            <PushButton $quiet aria-label="По спаду"><FallEdge /></PushButton>
          </EdgeRow>
        </Group>

        <Stack>
          <MarkersGroup $w={200}>
            <Legend $color="#0060a8">Положение маркеров</Legend>
            <MarkerMenu aria-label="Настройки маркеров" />
            <MarkerValues>
              <MarkerValue $color="#800080"><dt>T1=</dt><dd>5,0669 с</dd></MarkerValue>
              <MarkerValue $color="#800000"><dt>ΔT=</dt><dd>100 мс</dd></MarkerValue>
              <MarkerValue $color="#008000"><dt>T2=</dt><dd>5,1669 с</dd></MarkerValue>
              <MarkerValue $color="#000080"><dt>RPM=</dt><dd>1200 об/мин</dd></MarkerValue>
            </MarkerValues>
          </MarkersGroup>
          <ControlGroup $w={200}>
            <Legend $color="#008000">Управление</Legend>
            <ModeRow>
              <PushButton aria-label="Экран"><Screen /></PushButton>
              <PushButton aria-label="Лента"><Tape /></PushButton>
              <PushButton $bg="#e6efe4" aria-label="Запись"><Scroll /></PushButton>
            </ModeRow>
            <RunRow>
              <StartButton><S w={8} h={12}><path d="M1 1l6 5-6 5z" fill="#1a8a1a" stroke="#064a06" /></S>Пуск</StartButton>
              <Timer>[ 00:00:07:590 ]</Timer>
            </RunRow>
          </ControlGroup>
        </Stack>
      </Panels>
      <StatusBar />
    </Window>
  );
}
